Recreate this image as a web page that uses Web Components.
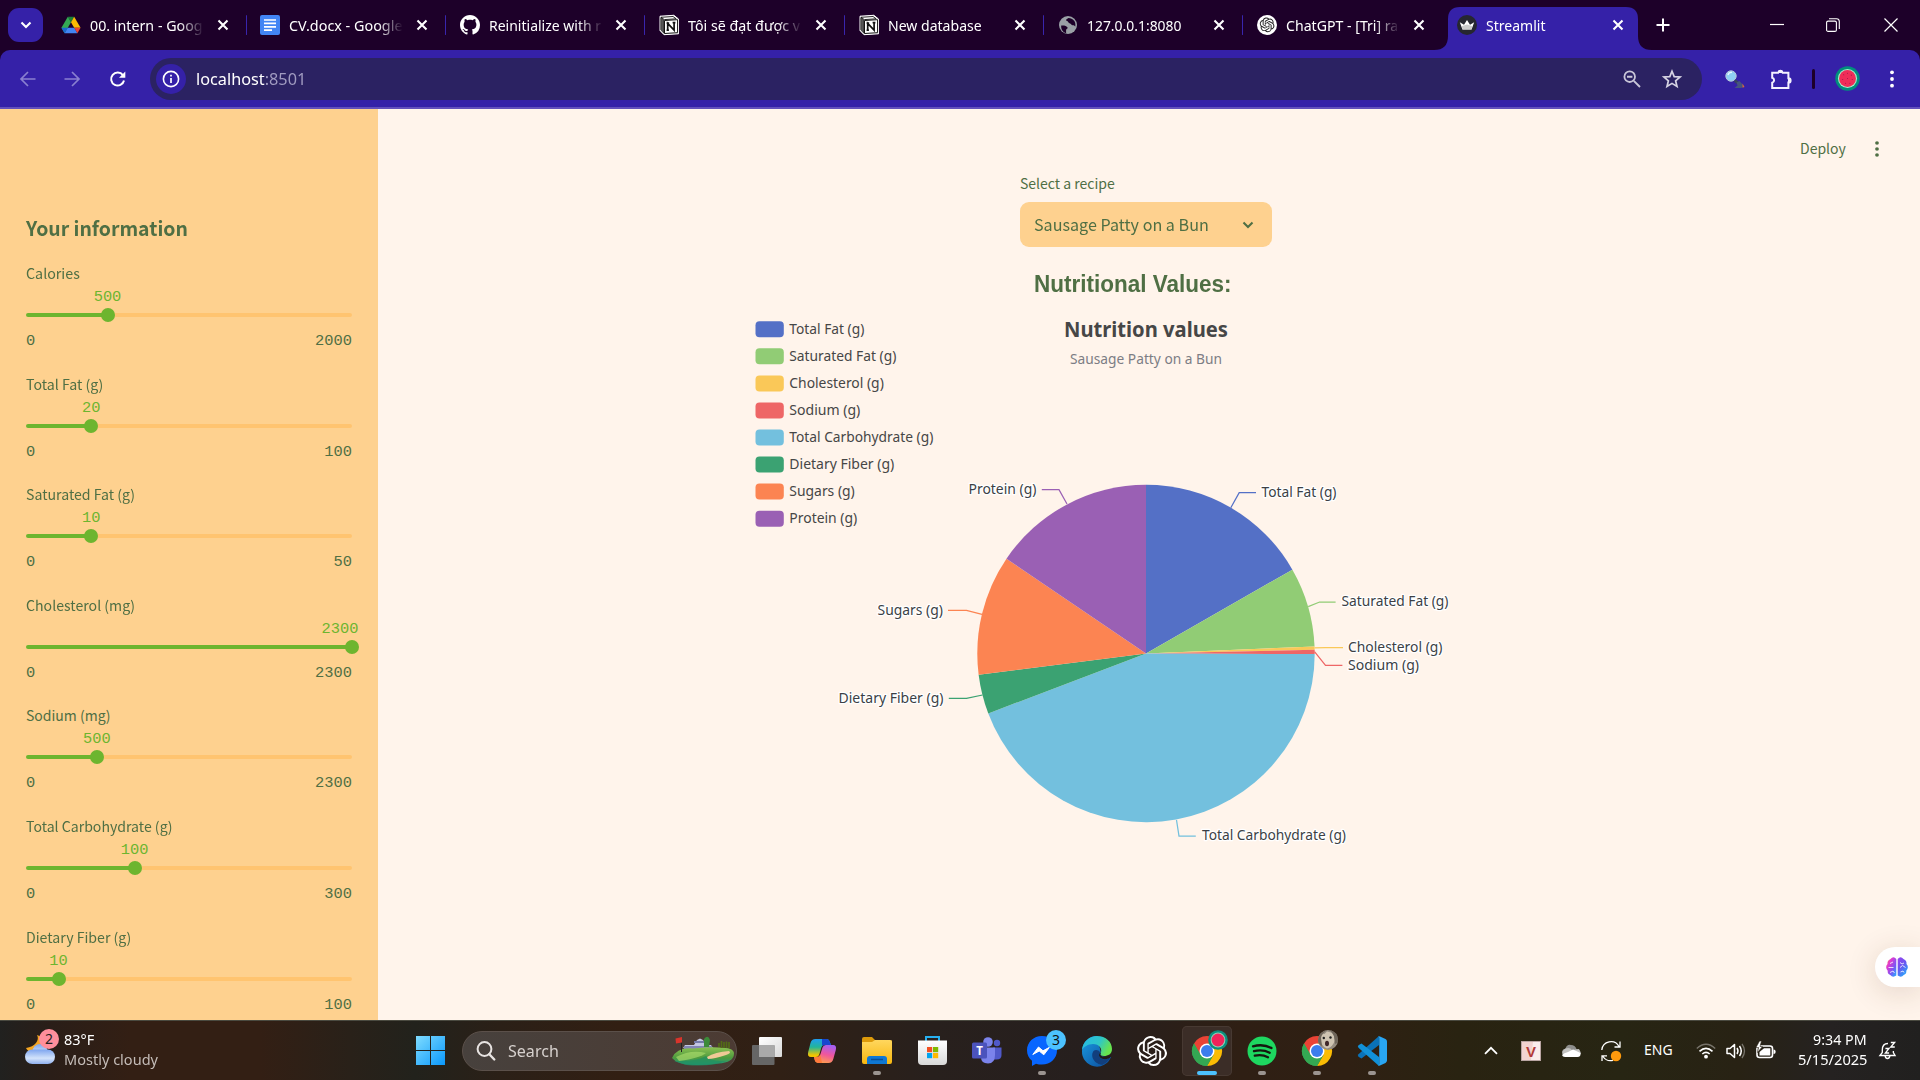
<!DOCTYPE html>
<html lang="en">
<head>
<meta charset="utf-8">
<title>Streamlit</title>
<style>
html,body{margin:0;padding:0;width:1920px;height:1080px;overflow:hidden;background:#fff4eb}
body{font-family:"Noto Sans",sans-serif}
</style>
</head>
<body>
<desktop-screen></desktop-screen>
<script>
const GPT='M22.2819 9.8211a5.9847 5.9847 0 0 0-.5157-4.9108 6.0462 6.0462 0 0 0-6.5098-2.9A6.0651 6.0651 0 0 0 4.9807 4.1818a5.9847 5.9847 0 0 0-3.9977 2.9 6.0462 6.0462 0 0 0 .7427 7.0966 5.98 5.98 0 0 0 .511 4.9107 6.051 6.051 0 0 0 6.5146 2.9001A5.9847 5.9847 0 0 0 13.2599 24a6.0557 6.0557 0 0 0 5.7718-4.2058 5.9894 5.9894 0 0 0 3.9977-2.9001 6.0557 6.0557 0 0 0-.7475-7.0729zm-9.022 12.6081a4.4755 4.4755 0 0 1-2.8764-1.0408l.1419-.0804 4.7783-2.7582a.7948.7948 0 0 0 .3927-.6813v-6.7369l2.02 1.1686a.071.071 0 0 1 .038.052v5.5826a4.504 4.504 0 0 1-4.4945 4.4944zm-9.6607-4.1254a4.4708 4.4708 0 0 1-.5346-3.0137l.142.0852 4.783 2.7582a.7712.7712 0 0 0 .7806 0l5.8428-3.3685v2.3324a.0804.0804 0 0 1-.0332.0615L9.74 19.9502a4.4992 4.4992 0 0 1-6.1408-1.6464zM2.3408 7.8956a4.485 4.485 0 0 1 2.3655-1.9728V11.6a.7664.7664 0 0 0 .3879.6765l5.8144 3.3543-2.0201 1.1685a.0757.0757 0 0 1-.071 0l-4.8303-2.7865A4.504 4.504 0 0 1 2.3408 7.872zm16.5963 3.8558L13.1038 8.364 15.1192 7.2a.0757.0757 0 0 1 .071 0l4.8303 2.7913a4.4944 4.4944 0 0 1-.6765 8.1042v-5.6772a.79.79 0 0 0-.407-.667zm2.0107-3.0231l-.142-.0852-4.7735-2.7818a.7759.7759 0 0 0-.7854 0L9.409 9.2297V6.8974a.0662.0662 0 0 1 .0284-.0615l4.8303-2.7866a4.4992 4.4992 0 0 1 6.6802 4.66zM8.3065 12.863l-2.02-1.1638a.0804.0804 0 0 1-.038-.0567V6.0742a4.4992 4.4992 0 0 1 7.3757-3.4537l-.142.0805L8.704 5.459a.7948.7948 0 0 0-.3927.6813zm1.0976-2.3654l2.602-1.4998 2.6069 1.4998v2.9994l-2.5974 1.4997-2.6067-1.4997Z';
const ICONS = {
drive:['0 0 24 24','<path d="M8.2 2h7.6L12 8.7z" fill="#188038"/><path d="M8.2 2 .5 15.4l3.8 6.6L12 8.7z" fill="#34a853"/><path d="M15.8 2 12 8.7l3.8 6.7h7.7z" fill="#fbbc04"/><path d="M8 15.4h8L19.7 22H4.3z" fill="#4285f4"/><path d="M8 15.4H.5L4.3 22z" fill="#1967d2"/><path d="M15.8 15.4h7.7L19.7 22z" fill="#ea4335"/>'],
docs:['0 0 20 20','<rect width="20" height="20" rx="2" fill="#4285f4"/><path d="M4 5h12M4 8.4h12M4 11.8h12M4 15.2h8" stroke="#fff" stroke-width="1.7"/>'],
github:['0 0 16 16','<path fill="#fff" d="M8 0C3.58 0 0 3.58 0 8c0 3.54 2.29 6.53 5.47 7.59.4.07.55-.17.55-.38 0-.19-.01-.82-.01-1.49-2.01.37-2.53-.49-2.69-.94-.09-.23-.48-.94-.82-1.13-.28-.15-.68-.52-.01-.53.63-.01 1.08.58 1.23.82.72 1.21 1.87.87 2.33.66.07-.52.28-.87.51-1.07-1.78-.2-3.64-.89-3.64-3.95 0-.87.31-1.59.82-2.15-.08-.2-.36-1.02.08-2.12 0 0 .67-.21 2.2.82.64-.18 1.32-.27 2-.27s1.36.09 2 .27c1.53-1.04 2.2-.82 2.2-.82.44 1.1.16 1.92.08 2.12.51.56.82 1.27.82 2.15 0 3.07-1.87 3.75-3.65 3.95.29.25.54.73.54 1.48 0 1.07-.01 1.93-.01 2.2 0 .21.15.46.55.38A8.01 8.01 0 0 0 16 8c0-4.42-3.58-8-8-8z"/>'],
notion:['0 0 20 20','<path d="M1 1.2 14.8.3 19.5 4v14.8L5 19.7 1 15.5z" fill="#fff" stroke="#fff" stroke-linejoin="round"/><path d="M2 2.3 14 1.5l3.2 2.3L5.3 4.6z" fill="#fff" stroke="#111" stroke-width=".9"/><path d="M1.7 2.6 5 5.2V18.3L1.7 14.8z" fill="#555" stroke="#111" stroke-width=".6"/><path d="M5.5 5.5 18.6 4.7v13L5.5 18.5z" fill="#fff" stroke="#111"/><path d="M8.7 15.2V8.3l6.4 6.8V7.5M7.6 8.2h2.6M13.6 7.6h2.8M7.6 15.2h2.3" fill="none" stroke="#111" stroke-width="1.7"/>'],
globe:['0 0 20 20','<circle cx="10" cy="10" r="9" fill="#9aa0a6"/><path d="M3.2 10.5c2.5-.3 5.6.3 6.4 2 .5 1.200-1.500 1.500-1.500 2.500v3.200c-3-.7-5.300-3.600-4.900-7.700zM10.500 3c-2.600 1.200-3.300 2.300-1.400 3 1.500.5 1 2 2.400 2.200 1.800.2 1.600 2.300 3.500 2 .8-.1 1.300.3 2.300 1.200.8-5-2.300-8.200-6.800-8.400z" fill="#1d0029"/>'],
gpt:['0 0 24 24','<path fill="currentColor" d="'+GPT+'"/>'],
gptTab:['0 0 36 36','<circle cx="18" cy="18" r="18" fill="#fff"/><path transform="translate(5 4.500) scale(1.100)" fill="#222" d="'+GPT+'"/>'],
streamlit:['0 0 20 20','<circle cx="10" cy="10" r="10" fill="#262730"/><path d="M2.800 7.200 7 9.800l3-4.800 3 4.800 4.200-2.600-2.700 7.300h-9z" fill="#fff"/><path d="M4.500 11.200 10 9.500l5.500 1.700-1 3.300h-9z" fill="#ccc"/>'],
close:['0 0 12 12','<path d="M1.500 1.500l9 9M10.500 1.500l-9 9" stroke="#fff" stroke-width="2.100"/>'],
plus:['0 0 14 14','<path d="M7 .5v13M.5 7h13" stroke="#fff" stroke-width="2"/>'],
chev:['0 0 12 8','<path d="M1.500 1.500 6 6l4.500-4.500" fill="none" stroke="currentColor" stroke-width="2.100"/>'],
min:['0 0 14 14','<path d="M0 6.500h14" stroke="#fff" stroke-width="1.200"/>'],
restore:['0 0 14 14','<rect x=".6" y="3.100" width="9.800" height="10.300" rx="1.500" fill="none" stroke="#fff" stroke-width="1.100"/><path d="M3 .7h7.500Q13.300.7 13.300 3.500V11" fill="none" stroke="#fff" stroke-width="1.100"/>'],
winclose:['0 0 14 14','<path d="M.5.5l13 13M13.500.5l-13 13" stroke="#fff" stroke-width="1.200"/>'],
back:['0 0 16 16','<path d="M15.500 8H1.500M8 1 1 8l7 7" fill="none" stroke="#8a80d0" stroke-width="1.700"/>'],
fwd:['0 0 16 16','<path d="M.5 8h14M8 1l7 7-7 7" fill="none" stroke="#8a80d0" stroke-width="1.700"/>'],
reload:['0 0 16 16','<path d="M14 9.500A6.500 6.500 0 1 1 12.900 4.200L14 5.500" fill="none" stroke="#fff" stroke-width="2"/><path d="M15.300.5v6.300H9z" fill="#fff"/>'],
info:['0 0 18 18','<circle cx="9" cy="9" r="7.600" fill="none" stroke="#fff" stroke-width="1.600"/><path d="M9 8v5M9 4.800v1.800" stroke="#fff" stroke-width="1.700"/>'],
zoomout:['0 0 18 18','<circle cx="6.700" cy="6.700" r="5.300" fill="none" stroke="#c9c6d8" stroke-width="1.800"/><path d="M4 6.700h5.400M10.800 10.800l6.200 6.200" stroke="#c9c6d8" stroke-width="1.900"/>'],
star:['0 0 20 20','<path d="M10 2.200l2.200 5.400 5.900.4-4.500 3.800 1.400 5.700-5-3.100-5 3.100 1.400-5.700L1.900 8l5.900-.4z" fill="none" stroke="#d6d3e3" stroke-width="1.700"/>'],
lens:['0 0 20 20','<circle cx="6" cy="7" r="5.200" fill="#8fd0f4" stroke="#b9c7da" stroke-width="1"/><path d="M3 6a3.500 3.500 0 0 1 4-2.500" stroke="#e9f8ff" stroke-width="1.400" fill="none"/><path d="M9.700 11.300l3 2.700" stroke="#39445f" stroke-width="3"/><path d="M11.500 13.500l3-1.500 4 4.500-2 2.500H9.500l3-2.500z" fill="#46557f"/><path d="M17.500 14.500l2 3.500-2 .8z" fill="#d56a3c"/>'],
puzzle:['0 0 22 22','<path d="M2.200 4.800h5.900a2.400 2.400 0 0 1 4.600 0h5.700v5.400a2.200 2.200 0 0 1 0 4.400v5.300H2.200v-5.200a2.600 2.600 0 0 0 0-5z" fill="none" stroke="#f4f1ff" stroke-width="2"/><path d="M8 3.700a2.400 1.900 0 0 1 4.800 0V5H8zM18 10.200a2.200 2.200 0 0 1 0 4.400z" fill="#f4f1ff"/>'],
melon:['0 0 26 26','<circle cx="13" cy="13" r="12.700" fill="#008f7c"/><circle cx="13" cy="13" r="9.900" fill="#a8efcf"/><circle cx="13" cy="13" r="8.800" fill="#f02d59"/><g fill="#9c1a45"><circle cx="9" cy="9" r=".55"/><circle cx="13" cy="7.500" r=".55"/><circle cx="17" cy="9.500" r=".55"/><circle cx="8" cy="14" r=".55"/><circle cx="13" cy="13" r=".55"/><circle cx="18" cy="14" r=".55"/><circle cx="11" cy="18" r=".55"/><circle cx="15.500" cy="18" r=".55"/></g>'],
melonBadge:['0 0 20 20','<circle cx="10" cy="10" r="9.800" fill="#0b8f7d"/><circle cx="10" cy="10" r="7.400" fill="#8fd3b6"/><circle cx="10" cy="10" r="6.400" fill="#f0245a"/>'],
dots:['0 0 4 18','<g fill="currentColor"><circle cx="2" cy="2.300" r="1.900"/><circle cx="2" cy="9" r="1.900"/><circle cx="2" cy="15.700" r="1.900"/></g>'],
weather:['0 0 36 36','<defs><linearGradient id="c" x1="0" y1="0" x2="0" y2="1"><stop offset="0" stop-color="#7ea5ef"/><stop offset=".6" stop-color="#d3e3fb"/><stop offset="1" stop-color="#8fb0ef"/></linearGradient></defs><path d="M14 5c3 5-2 12-11 13 3 6 12 8 17 2s1-13-6-15z" fill="#f5a623"/><circle cx="17" cy="21.500" r="7.500" fill="url(#c)"/><rect x="2" y="19.500" width="30" height="14.500" rx="7.300" fill="url(#c)"/>'],
start:['0 0 29 29','<defs><linearGradient id="w" x1="0" y1="0" x2="1" y2="1"><stop offset="0" stop-color="#7fdcff"/><stop offset="1" stop-color="#0a98fb"/></linearGradient></defs><path d="M0 0h14v14H0zM15 0h14v14H15zM0 15h14v14H0zM15 15h14v14H15z" fill="url(#w)"/>'],
search:['0 0 20 20','<circle cx="8.500" cy="8" r="6.900" fill="none" stroke="#e8e4e2" stroke-width="2"/><path d="M13.300 13.200l5 5.300" stroke="#e8e4e2" stroke-width="2.400" stroke-linecap="round"/>'],
golf:['0 0 64 30','<defs><linearGradient id="g" x1="0" y1="0" x2="0" y2="1"><stop offset="0" stop-color="#8cc152"/><stop offset=".6" stop-color="#4d9a3e"/><stop offset="1" stop-color="#1f9a80"/></linearGradient></defs><path d="M12 12h30l-2-3h-5l-3-5-3-1.500L26 4l-3 5h-9z" fill="#c3c6e2"/><path d="M13 10h28v3H13z" fill="#8286b4"/><path d="M23 6h12" stroke="#747aa8" stroke-width="2"/><path d="M33 3q4-5 6 1l-1 7h-5z" fill="#3c8a3a"/><path d="M1 22Q6 11 22 12.500q18-2 26-1 15 0 15 6 0 9-16 10-30 4-42-2z" fill="url(#g)"/><path d="M5 21q15-8 30-4-6 5-27 8z" fill="#a6d96a" opacity=".7"/><path d="M3 25q22 1 32-5 5 6 20 5-14 6-40 4z" fill="#1f8f63" opacity=".7"/><path d="M36 21q8-5 22-6 3 2-3 4-12 4-18 4z" fill="#f0c996"/><path d="M48 11V7M50.500 12V5M53 12V6M55.500 12V5.500M58 12V6" stroke="#536b16" stroke-width="1.700"/><path d="M10.500 2v14" stroke="#222" stroke-width="1"/><path d="M4.500 2.500 11 1v5.500l-6 1z" fill="#d9342b"/>'],
taskview:['0 0 30 28','<defs><linearGradient id="t" x1="0" y1="0" x2="1" y2="1"><stop offset="0" stop-color="#fff"/><stop offset="1" stop-color="#d9d9d9"/></linearGradient></defs><rect x="7" y="0" width="23" height="20" rx="1" fill="url(#t)"/><rect x="0" y="8" width="22.500" height="20" rx="1" fill="#666"/><rect x="7" y="8" width="15.500" height="12" fill="#a9a9a9"/>'],
copilot:['0 0 28 26','<defs><linearGradient id="a" x1="0" y1="0" x2="0" y2="1"><stop offset="0" stop-color="#1f9cf0"/><stop offset=".45" stop-color="#22b59a"/><stop offset=".9" stop-color="#f2c500"/></linearGradient><linearGradient id="b" x1=".6" y1="0" x2=".3" y2="1"><stop offset="0" stop-color="#a55ff0"/><stop offset=".5" stop-color="#f0569c"/><stop offset="1" stop-color="#ffa14b"/></linearGradient></defs><path d="M7.500 1h11q2.500 0 3.300 3L23 7h-7q-2 0-2.700 2.500l-2 7q-.8 2.500-3.300 2.500H3q-4 0-2.800-5l2.300-9Q3.500 1 7.500 1z" fill="url(#a)"/><path d="M14 1h4.500q2.500 0 3.300 3L23 7h-6q-2 0-3 1z" fill="#1746cf"/><path d="M20.500 25H10q-2.500 0-3.200-2.800L6 19h3q2.500 0 3.300-2.500l2.200-7Q15.300 7 17.800 7H25q4 0 2.800 5l-2.500 9q-1 4-4.800 4z" fill="url(#b)"/><path d="M6 19h3q2.500 0 3.300-2.500L14 25h-4q-2.500 0-3.200-2.800z" fill="#ff7a3c"/>'],
folder:['0 0 30 27','<defs><linearGradient id="f" x1="0" y1="0" x2="0" y2="1"><stop offset="0" stop-color="#ffd75e"/><stop offset="1" stop-color="#f8b70f"/></linearGradient></defs><path d="M0 2q0-2 2-2h8l3.500 3.500H30V12H0z" fill="#dd9a0a"/><path d="M0 5h10l3-2h15q2 0 2 2v20q0 2-2 2H2q-2 0-2-2z" fill="url(#f)"/><path d="M5 27v-5q0-3 3-3h14q3 0 3 3v5z" fill="#0f78d4"/><path d="M9 22.500h12" stroke="#0a4f96" stroke-width="1.500"/>'],
store:['0 0 29 29','<defs><linearGradient id="s" x1="0" y1="0" x2="0" y2="1"><stop offset="0" stop-color="#fff"/><stop offset="1" stop-color="#d8d8d8"/></linearGradient></defs><path d="M8 7V1h13v6" fill="none" stroke="#27b0f0" stroke-width="2"/><path d="M0 4.500h29V25q0 4-4 4H4q-4 0-4-4z" fill="url(#s)"/><path d="M9 11h5.200v5.200H9z" fill="#f25022"/><path d="M15 11h5.200v5.200H15z" fill="#7fba00"/><path d="M9 17h5.200v5.200H9z" fill="#00a4ef"/><path d="M15 17h5.200v5.200H15z" fill="#ffb900"/>'],
teams:['0 0 30 27','<circle cx="16" cy="5" r="4.800" fill="#7b83eb"/><circle cx="25" cy="6" r="3.200" fill="#5059c9"/><path d="M21 10.500h8.500V18q0 4.500-5 4.500h-3z" fill="#5059c9"/><path d="M9 10.500h14V18q0 8.500-7 8.500T9 20z" fill="#7b83eb"/><rect y="5.500" width="15" height="16" rx="1.500" fill="#4b53bc"/><text x="7.500" y="17.500" font-size="11.500" font-weight="700" font-family="Noto Sans,sans-serif" fill="#fff" text-anchor="middle">T</text>'],
messenger:['0 0 30 30','<path d="M15 0C6.500 0 0 6.200 0 14.300c0 4.400 1.900 8 5 10.500V30l4-2.200c2 .6 3.800.8 6 .8 8.500 0 15-6.200 15-14.300S23.500 0 15 0z" fill="#0866ff"/><path d="M5.800 18.500 11.500 11l4.500 3.800 6.500-3.500-5.700 7.500-4.600-3.800z" fill="#fff" stroke="#fff" stroke-linejoin="round"/>'],
edge:['0 0 30 30','<defs><linearGradient id="e1" x1="0" y1="0" x2="1" y2=".4"><stop offset="0" stop-color="#25b9e6"/><stop offset=".6" stop-color="#2ec6c9"/><stop offset="1" stop-color="#67e34f"/></linearGradient><linearGradient id="e2" x1="0" y1="0" x2="1" y2="1"><stop offset="0" stop-color="#1b9de2"/><stop offset="1" stop-color="#0b4a9b"/></linearGradient></defs><path d="M0 15A15 15 0 0 1 15 0l4 17c-.6 3 2 4.500 10 4A15 15 0 0 1 0 15z" fill="url(#e2)"/><path d="M0 14C1 5 8 0 15 0c9 0 15 6 15 13 0 5-4 7-8 7-3 0-4-1.200-3.500-2.500C21 13 17 8 11 8 6 8 1.500 11 0 14z" fill="url(#e1)"/><path d="M11.500 15c-4 6 2 13.500 9 13.800 3-1.300 6-4 7.500-7-4 3-9 2-10.500-1-1-2-.3-3 .6-4.300-1.600-3-5-3-6.600-1.500z" fill="#123f7d"/><path d="M19 17c-1.500 1.500 0 3.800 4 3.800 2.500 0 4.500-.6 6-2l-1 3c-4 2.400-9 1.700-10.500-1-1-2-.3-3 .6-4.300z" fill="#221a18"/>'],
chrome:['0 0 30 30','<path d="M15 15 2 7.500A15 15 0 0 1 28 7.500H15z" fill="#ea4335"/><path d="M15 15 2 7.500A15 15 0 0 0 15 30l6.500-11.200z" fill="#34a853"/><path d="M15 7.500h13A15 15 0 0 1 15 30l6.500-11.200z" fill="#fbbc04"/><path d="M2 7.500 8.500 18.700 15 15V7.500z" fill="#ea4335"/><path d="M2 7.500A15 15 0 0 0 15 30l6.500-11.200L15 22.500l-6.500-3.700z" fill="#34a853"/><circle cx="15" cy="15" r="7.500" fill="#fff"/><circle cx="15" cy="15" r="6" fill="#3b7ded"/>'],
cat:['0 0 20 20','<circle cx="10" cy="10" r="10" fill="#958c80"/><path d="M2 7Q4 3 6.500 4L9 1.500 15 3l2 7q-2 7-8 8.500Q2 16 2 7z" fill="#cfc4b2"/><path d="M0 10q1-8 9-10-5 3-6 8l1 8Q0 14 0 10zM20 10Q20 2 12 0l4 6 1 8q3-1 3-4z" fill="#6f665b"/><circle cx="5.800" cy="8" r="1.200" fill="#222"/><circle cx="12.500" cy="7.500" r="1.200" fill="#222"/><ellipse cx="9" cy="13.500" rx="2" ry="2.800" fill="#40282a"/>'],
spotify:['0 0 30 30','<circle cx="15" cy="15" r="14.500" fill="#1ed760"/><path d="M6 10.300q10-2.800 18.500 1.700M7 15.200q8.500-2.200 15.700 1.500M7.800 19.700q7-1.800 13.200 1.500" fill="none" stroke="#15180f" stroke-width="2.300" stroke-linecap="round"/>'],
vscode:['0 0 30 30','<path d="M22 0v9L4.500 22.500 1.800 21Q0 19.700 1.500 18.200z" fill="#0a72b8"/><path d="M22 30v-9L4.500 7.500 1.800 9Q0 10.300 1.500 11.800z" fill="#1191d8"/><path d="M21 0q1 0 2 .4l5.500 2.700Q30 4 30 5.500v19q0 1.500-1.500 2.400L23 29.600q-1 .4-2 .4 1.200-.4 1.200-2V2q0-1.600-1.200-2z" fill="#29a6f3"/>'],
up:['0 0 14 9','<path d="M1 7.800 7 1.800l6 6" fill="none" stroke="#fff" stroke-width="1.800"/>'],
vkey:['0 0 20 20','<rect width="20" height="20" fill="#b9a5a3"/><rect x="1" y="1" width="18" height="18" fill="#f2d3d0"/><path d="M12 1h7v18h-9z" fill="#fff" opacity=".6"/><text x="10" y="15.500" font-size="15" font-weight="700" font-family="Liberation Sans,sans-serif" fill="#b23a3a" text-anchor="middle">V</text>'],
cloud:['0 0 20 14','<path d="M2 11q-3-5 2.500-6.500Q6 0 10 1q4 0 5.500 4Q20 6 19.500 10z" fill="#8e8e8c"/><path d="M4.500 4.500Q9 3 11 6l7-1q2 3 1.500 5L2 11q-2-4 2.500-6.500z" fill="#c2c2c0"/><path d="M1 11q2-2 6-3l5-2.500L19.500 9q.5 4-3 4H4q-2.500 0-3-2z" fill="#fff"/>'],
sync:['0 0 20 20','<path d="M.8 9A9.200 9.200 0 0 1 18 5.500M19 .5V6h-5.500M12 19.300A9.200 9.200 0 0 1 2 15.500M1 20v-5.200h5" fill="none" stroke="#fff" stroke-width="1.300"/><circle cx="15" cy="15" r="5.200" fill="#ff9a0d"/>'],
wifi:['0 0 20 16','<path d="M.8 5.500q9.200-8.500 18.400 0" fill="none" stroke="#77736a" stroke-width="1.400"/><path d="M3.500 8.300q6.500-6 13 0M6.300 11q3.700-3.400 7.400 0" fill="none" stroke="#fff" stroke-width="1.600"/><circle cx="10" cy="13.700" r="1.900" fill="#fff"/>'],
speaker:['0 0 20 16','<path d="M1 5.500h3L8.500 1.500v13L4 10.500H1z" fill="none" stroke="#fff" stroke-width="1.500" stroke-linejoin="round"/><path d="M11 5q2 3 0 6M13.500 3q3.500 5 0 10" fill="none" stroke="#fff" stroke-width="1.500"/><path d="M16 1q5 7 0 14" fill="none" stroke="#77736a" stroke-width="1.300"/>'],
battery:['0 0 20 16','<rect x="1" y="3" width="15.500" height="11.500" rx="2.500" fill="none" stroke="#fff" stroke-width="1.600"/><path d="M3.500 12.500V9L8 5.300h6.300v7.200z" fill="#fff"/><path d="M17.500 6.500q2.200 0 2.200 2.200t-2.200 2.200z" fill="#fff"/><path d="M3.500-2 0 4.500h2.500L1.500 9.500 6.500 3.500H4L5.500-2z" fill="#fff" stroke="#2a2215" stroke-width=".6"/>'],
bell:['0 0 18 19','<path d="M9.500 2.500q-6 0-6 6.500v2.500L1 14.500h16l-1.800-3V10M6.500 15q.5 2.500 2.500 2.500t2.500-2.500" fill="none" stroke="#fff" stroke-width="1.400"/><path d="M6.800 7.500h3.700L6.800 12h3.900M12.500 1.500h4L12.500 6h4.200" fill="none" stroke="#fff" stroke-width="1.400"/>'],
brain:['0 0 22 20','<defs><linearGradient id="p" x1="0" y1="0" x2="1" y2="1"><stop offset="0" stop-color="#ff8a2c"/><stop offset=".3" stop-color="#e23ad0"/><stop offset=".65" stop-color="#7a56f5"/><stop offset="1" stop-color="#1fb4ff"/></linearGradient><linearGradient id="q" x1="0" y1="0" x2=".6" y2="1"><stop offset="0" stop-color="#9a45ee"/><stop offset=".5" stop-color="#6b55f0"/><stop offset="1" stop-color="#2aa6fb"/></linearGradient></defs><path d="M10.300 2v16.500q-3.500 2.500-6-.5-3-1-2.600-4.200Q-1.300 10 1.500 7 1 3.500 4.500 2q3-3.300 5.800 0z" fill="url(#p)"/><path d="M11.700 2v16.500q3.500 2.500 6-.5 3-1 2.600-4.200 3-3.800.2-6.800.5-3.500-3-5-3-3.300-5.800 0z" fill="url(#q)"/><path d="M4 6.500 7 5M2.500 10.500h5M4 15.500l3-1.500 1.500 2M14 5.500l2 1.500 2-1M14 10.500l2.500-2 3 2M14.500 15l2.500-1 1 1.500" fill="none" stroke="#fff" stroke-width="1" opacity=".8"/>']
};

class UiIcon extends HTMLElement{
  connectedCallback(){
    const [vb,body]=ICONS[this.getAttribute('name')];
    const w=this.getAttribute('w'),h=this.getAttribute('h')||w;
    this.attachShadow({mode:'open'}).innerHTML=`<style>:host{display:block;flex:none;width:${w}px;height:${h}px}svg{display:block;overflow:visible}</style><svg viewBox="${vb}" width="${w}" height="${h}" preserveAspectRatio="none">${body}</svg>`;
  }
}
customElements.define('ui-icon',UiIcon);

/* Single-line text condensed to a given advance width. */
class FitText extends HTMLElement{
  connectedCallback(){
    const w=+this.getAttribute('w');
    this.attachShadow({mode:'open'}).innerHTML=`<style>:host{display:block;flex:none;white-space:nowrap;width:${w}px}span{display:inline-block;transform-origin:0 50%}</style><span><slot></slot></span>`;
    const s=this.shadowRoot.querySelector('span');
    s.style.transform=`scaleX(${w/s.offsetWidth})`;
  }
}
customElements.define('fit-text',FitText);

class BrowserTab extends HTMLElement{
  connectedCallback(){
    this.attachShadow({mode:'open'}).innerHTML=`<style>
    :host{display:flex;flex:none;box-sizing:border-box;width:199.400px;height:50px;align-items:center;padding-left:14px;color:#fff;font-size:14.500px;line-height:34px;position:relative}
    :host([active]) .bg{display:block}
    .bg{display:none;position:absolute;left:-9px;top:7px}
    ui-icon,.t{position:relative}
    .t{width:114px;height:34px;margin-left:9px;flex:none}
    :host([fade]) .t{-webkit-mask-image:linear-gradient(90deg,#000 78%,transparent 100%);mask-image:linear-gradient(90deg,#000 78%,transparent 100%)}
    .x{margin-left:12.500px}
    i{display:block;width:3px;height:20px;border-radius:2px;background:#3925ad;margin-left:17px}
    :host([active]) i,:host([last]) i{visibility:hidden}
    </style><svg class="bg" width="218" height="43"><path d="M0 43q14 0 14-14V12Q14 0 26 0h166q12 0 12 12v17q0 14 14 14z" fill="#3521a8"/></svg>
    <ui-icon name="${this.getAttribute('icon')}" w="20"></ui-icon><div class="t"><fit-text w="${this.getAttribute('tw')}">${this.getAttribute('label')}</fit-text></div><ui-icon class="x" name="close" w="12"></ui-icon><i></i>`;
  }
}
customElements.define('browser-tab',BrowserTab);

class BrowserChrome extends HTMLElement{
  connectedCallback(){
    this.attachShadow({mode:'open'}).innerHTML=`<style>
    :host{display:block;height:109px;background:#1d0029}
    .tabs{height:50px;display:flex;align-items:center}
    .dd{width:35px;height:34px;border-radius:11px;background:#3521a8;color:#fff;margin-left:8px;margin-right:4px;display:flex;align-items:center;justify-content:center}
    .plus{margin-left:14px}.min{margin-left:100px}.res{margin-left:42px}.cl{margin-left:44px}
    .bar{height:59px;box-sizing:border-box;border-bottom:2px solid #6350bb;background:#3521a8;border-radius:10px 10px 0 0;display:flex;align-items:center;color:#fff}
    .pill{width:1552px;height:42px;border-radius:21px;background:#2b2262;margin-left:24px;box-sizing:border-box;padding-left:6px;display:flex;align-items:center}
    .i{width:30px;height:30px;border-radius:50%;background:#3521a8;display:flex;align-items:center;justify-content:center}
    .u{margin-left:10px;font-size:17px;line-height:30px;margin-right:auto}
    .u span{color:#a09bc0}
    .sep{width:3px;height:20px;background:#1d0029;border-radius:2px;margin:0 20px 0 20px}
    </style><div class="tabs"><div class="dd"><ui-icon name="chev" w="12" h="8"></ui-icon></div>
    <browser-tab fade icon="drive" label="00. intern - Goog" tw="113"></browser-tab>
    <browser-tab fade icon="docs" label="CV.docx - Google" tw="114"></browser-tab>
    <browser-tab fade icon="github" label="Reinitialize with r" tw="112"></browser-tab>
    <browser-tab fade icon="notion" label="Tôi sẽ đạt được v" tw="112"></browser-tab>
    <browser-tab icon="notion" label="New database" tw="94"></browser-tab>
    <browser-tab icon="globe" label="127.0.0.1:8080" tw="94"></browser-tab>
    <browser-tab fade last icon="gptTab" label="ChatGPT - [Tri] ra" tw="112"></browser-tab>
    <browser-tab active icon="streamlit" label="Streamlit" tw="59"></browser-tab>
    <ui-icon class="plus" name="plus" w="14"></ui-icon><ui-icon class="min" name="min" w="14"></ui-icon><ui-icon class="res" name="restore" w="14"></ui-icon><ui-icon class="cl" name="winclose" w="14"></ui-icon></div>
    <div class="bar"><ui-icon name="back" w="16" style="margin-left:20px"></ui-icon><ui-icon name="fwd" w="16" style="margin-left:28px"></ui-icon><ui-icon name="reload" w="16" style="margin-left:30px"></ui-icon>
    <div class="pill"><div class="i"><ui-icon name="info" w="18"></ui-icon></div><fit-text class="u" w="110">localhost<span>:8501</span></fit-text><ui-icon name="zoomout" w="18"></ui-icon><ui-icon name="star" w="20" style="margin:0 20px 0 21px"></ui-icon></div>
    <ui-icon name="lens" w="20" style="margin-left:23px"></ui-icon><ui-icon name="puzzle" w="22" style="margin-left:25px"></ui-icon><div class="sep"></div><ui-icon name="melon" w="25"></ui-icon><ui-icon name="dots" w="4" h="18" style="margin-left:30px"></ui-icon></div>`;
  }
}
customElements.define('browser-chrome',BrowserChrome);

class SliderField extends HTMLElement{
  connectedCallback(){
    const g=n=>this.getAttribute(n),p=g('value')/g('max')*100;
    this.attachShadow({mode:'open'}).innerHTML=`<style>
    :host{display:block;height:110.600px;width:326px;flex:none;color:#4f6f44}
    .l{font:400 14px/22px "Noto Sans CJK SC",sans-serif;height:22px}
    .v,.r{font:400 15.400px/22px "Liberation Mono",monospace}
    .v{height:22px;margin-top:2px;display:flex;color:#6db52f}
    .v b{font-weight:400;width:0;display:flex;justify-content:center;margin-left:${g('shift')||p+'%'}}
    .k{height:4px;margin:5px 0 13px;border-radius:2px;background:linear-gradient(90deg,#6db52f ${p}%,#ffc470 ${p}%);display:flex;align-items:center}
    .k i{width:14px;height:14px;border-radius:50%;background:#6db52f;margin-left:calc(${p}% - 7px);flex:none}
    .r{display:flex;justify-content:space-between}
    </style><div class="l"><fit-text w="${g('w')}">${g('label')}</fit-text></div><div class="v"><b>${g('value')}</b></div><div class="k"><i></i></div><div class="r"><span>0</span><span>${g('max')}</span></div>`;
  }
}
customElements.define('slider-field',SliderField);

class SideBar extends HTMLElement{
  connectedCallback(){
    this.attachShadow({mode:'open'}).innerHTML=`<style>
    :host{display:flex;flex-direction:column;width:378px;height:911px;flex:none;box-sizing:border-box;padding:102px 26px 0;background:#fed18f;overflow:hidden}
    h2{margin:0 0 17px;font:600 20px/34px "Noto Sans CJK SC",sans-serif;color:#4f6f44;height:34px}
    </style><h2><fit-text w="162">Your information</fit-text></h2>
    <slider-field label="Calories" w="54" value="500" max="2000"></slider-field>
    <slider-field label="Total Fat (g)" w="77" value="20" max="100"></slider-field>
    <slider-field label="Saturated Fat (g)" w="109" value="10" max="50"></slider-field>
    <slider-field label="Cholesterol (mg)" w="109" value="2300" max="2300" shift="314px"></slider-field>
    <slider-field label="Sodium (mg)" w="85" value="500" max="2300"></slider-field>
    <slider-field label="Total Carbohydrate (g)" w="147" value="100" max="300"></slider-field>
    <slider-field label="Dietary Fiber (g)" w="105" value="10" max="100"></slider-field>`;
  }
}
customElements.define('side-bar',SideBar);

class NutritionPie extends HTMLElement{
  connectedCallback(){
    const cx=1146,cy=653.5,r=168.700;
    const D=[['Total Fat (g)','#5470c6',60.2,75,[1230.8,507.7,1239.2,492.7,1256,492.7],1261.5],
    ['Saturated Fat (g)','#91cc75',87.6,107,[1308.2,606.7,1319.6,602,1335.6,602],1341.5],
    ['Cholesterol (g)','#fac858',88.7,94.500,[1314.5,647.8,1325,647.6,1343,647.6],1348],
    ['Sodium (g)','#ee6666',90.2,71,[1314.5,651.7,1325.5,665.4,1342.4,665.4],1348],
    ['Total Carbohydrate (g)','#73c0de',249.2,144,[1176.5,820,1179,836,1195.8,836],1202],
    ['Dietary Fiber (g)','#3ba272',262.8,105,[982.5,695,966.5,698.4,948.8,698.4],838.5],
    ['Sugars (g)','#fc8452',304.2,65.500,[982,614.3,966.5,610.3,948,610.3],877.5],
    ['Protein (g)','#9a60b4',360,68,[1067,504,1059,489.7,1041.8,489.7],968.500]];
    let a=0,out='';
    const pt=d=>{const t=d*Math.PI/180;return (cx+r*Math.sin(t)).toFixed(2)+' '+(cy-r*Math.cos(t)).toFixed(2)};
    D.forEach(([n,c,e,w,l,x],i)=>{
      out+=`<path d="M${cx} ${cy}L${pt(a)}A${r} ${r} 0 ${e-a>180?1:0} 1 ${pt(e)}z" fill="${c}"/>`;
      out+=`<polyline points="${l}" fill="none" stroke="${c}" stroke-width="1.250"/>`;
      out+=`<text class="h" x="${x}" y="${l[5]+4.300}" textLength="${w}" lengthAdjust="spacingAndGlyphs">${n}</text>`;
      out+=`<rect x="755.500" y="${321.300+27.050*i}" width="28.300" height="16" rx="4" fill="${c}"/><text x="789.300" y="${333.500+27*i}" textLength="${w}" lengthAdjust="spacingAndGlyphs">${n}</text>`;
      a=e;
    });
    this.attachShadow({mode:'open'}).innerHTML=`<style>:host{display:block}svg{display:block}text{font:400 14.500px "Noto Sans",sans-serif;fill:#464646}.h{fill:#3c3f45;stroke:#fff;stroke-width:2.500px;paint-order:stroke;stroke-linejoin:round}.t{font:700 21.500px "Noto Sans",sans-serif;fill:#464646}.s{fill:#7c7d84}</style>
    <svg width="1542" height="700" viewBox="378 310 1542 700"><text class="t" x="1064" y="336.700" textLength="164" lengthAdjust="spacingAndGlyphs">Nutrition values</text><text class="s" x="1070" y="364" textLength="152" lengthAdjust="spacingAndGlyphs">Sausage Patty on a Bun</text>${out}</svg>`;
  }
}
customElements.define('nutrition-pie',NutritionPie);

class RecipePage extends HTMLElement{
  connectedCallback(){
    this.attachShadow({mode:'open'}).innerHTML=`<style>
    :host{display:flex;flex-direction:column;width:1542px;height:911px;background:#fff4eb;color:#4f6f44;position:relative;font-family:"Noto Sans CJK SC",sans-serif;overflow:hidden}
    header{height:61px;box-sizing:border-box;padding:18px 41px 0 0;display:flex;justify-content:flex-end;align-items:center;flex:none}
    header fit-text{font-size:14px;line-height:22px;margin-bottom:1px}
    header ui-icon{margin-left:29px}
    label{font-size:14px;line-height:22px;height:22px;margin:2px 0 8px 642px;display:block;flex:none}
    .s{margin-left:642px;width:252px;height:45px;border-radius:9px;background:#fed18f;box-sizing:border-box;padding:0 18px 0 14px;display:flex;align-items:center;justify-content:space-between;font-size:16.500px;line-height:26px;flex:none}
    .s fit-text{margin-bottom:1px}
    h3{margin:19px 0 0 656px;height:44px;flex:none;font:700 23.300px/36px "Liberation Sans",sans-serif}
    nutrition-pie{flex:none}
    .b{position:absolute;right:0;top:838px;width:45px;height:40px;border-radius:20px 0 0 20px;background:#fff;box-shadow:0 5px 30px rgba(90,50,20,.16);display:flex;align-items:center;padding-left:11px;box-sizing:border-box}
    </style><header><fit-text w="46">Deploy</fit-text><ui-icon name="dots" w="4" h="16"></ui-icon></header>
    <label><fit-text w="95">Select a recipe</fit-text></label>
    <div class="s"><fit-text w="175">Sausage Patty on a Bun</fit-text><ui-icon name="chev" w="12" h="8"></ui-icon></div>
    <h3><fit-text w="198">Nutritional Values:</fit-text></h3>
    <nutrition-pie></nutrition-pie><div class="b"><ui-icon name="brain" w="22" h="20"></ui-icon></div>`;
  }
}
customElements.define('recipe-page',RecipePage);

class TaskApp extends HTMLElement{
  connectedCallback(){
    const g=n=>this.getAttribute(n);
    this.attachShadow({mode:'open'}).innerHTML=`<style>
    :host{display:flex;flex:none;width:50px;height:50px;margin-right:5px;box-sizing:border-box;border-radius:5px;align-items:center;justify-content:center;position:relative;color:#fff}
    :host([active]){background:#3b2d27;box-shadow:inset 0 0 0 1px #473932}
    i{position:absolute;bottom:1px;left:21px;width:8px;height:4px;border-radius:2px;background:#9b9490}
    :host([active]) i{left:15px;width:20px;background:#4cc2ff}
    .b{position:absolute;right:4px;top:4px}
    .n{right:1px;width:20px;height:20px;border-radius:50%;background:#4cc2ff;color:#111;font-size:14px;line-height:20px;text-align:center}
    </style><ui-icon name="${g('icon')}" w="${g('w')||30}" h="${g('h')||g('w')||30}"></ui-icon>
    ${g('count')?`<div class="b n">${g('count')}</div>`:''}${g('badge')?`<ui-icon class="b" name="${g('badge')}" w="20"></ui-icon>`:''}${this.hasAttribute('open')||this.hasAttribute('active')?'<i></i>':''}`;
  }
}
customElements.define('task-app',TaskApp);

class TaskBar extends HTMLElement{
  connectedCallback(){
    this.attachShadow({mode:'open'}).innerHTML=`<style>
    :host{display:flex;align-items:center;height:60px;box-sizing:border-box;border-top:1px solid #4a4a40;color:#fff;background:linear-gradient(90deg,#21211f 0,#2a1e18 50px,#331f14 130px,#331f14 260px,#292119 350px,#22221c 415px,#2b2017 500px,#321f13 620px,#302015 780px,#28201d 930px,#261f1e 1090px,#2f1f14 1240px,#2f2013 1350px,#292311 1460px,#272513 1620px,#282214 1740px,#252221 1830px,#21201f 1920px);font-size:14px;line-height:20px}
    .w{position:relative;margin-left:23px;width:36px;height:36px;margin-bottom:5px}
    .w b{position:absolute;left:16px;top:-1px;width:20px;height:20px;border-radius:50%;background:#ff8f9c;color:#222;font-weight:400;text-align:center;line-height:20px}
    .wt{margin-left:5px;width:352px;color:#fff;margin-bottom:2px}
    .wt :last-child{color:#c4bcb8}
    .s{width:275px;height:40px;box-sizing:border-box;border-radius:20px;background:linear-gradient(90deg,#47413d,#4c3b33);border:1px solid #5b504a;display:flex;align-items:center;margin:0 5px 0 17px;padding:0 1px 0 13px;flex:none}
    .s fit-text{font-size:17px;line-height:26px;margin:0 auto 0 12px;color:#d7d1ce}
    .clock{display:flex;flex-direction:column;align-items:flex-end;margin-left:22px;margin-right:12px;margin-bottom:2px}
    </style><div class="w"><ui-icon name="weather" w="36"></ui-icon><b>2</b></div><div class="wt"><fit-text w="30">83°F</fit-text><fit-text w="94.500">Mostly cloudy</fit-text></div>
    <ui-icon name="start" w="29"></ui-icon><div class="s"><ui-icon name="search" w="20"></ui-icon><fit-text w="51">Search</fit-text><ui-icon name="golf" w="64" h="30"></ui-icon></div>
    <task-app icon="taskview" w="30" h="28"></task-app><task-app icon="copilot" w="28" h="26"></task-app><task-app open icon="folder" w="30" h="27"></task-app><task-app icon="store" w="29"></task-app><task-app icon="teams" w="30" h="27"></task-app><task-app open icon="messenger" count="3"></task-app><task-app icon="edge"></task-app><task-app icon="gpt"></task-app><task-app active icon="chrome" badge="melonBadge"></task-app><task-app open icon="spotify"></task-app><task-app open icon="chrome" badge="cat"></task-app><task-app open icon="vscode"></task-app>
    <ui-icon name="up" w="14" h="9" style="margin-left:82px"></ui-icon><ui-icon name="vkey" w="20" style="margin-left:23px"></ui-icon><ui-icon name="cloud" w="20" h="14" style="margin-left:20px"></ui-icon><ui-icon name="sync" w="20" style="margin-left:20px"></ui-icon><fit-text w="29" style="margin-left:23px;margin-bottom:1px">ENG</fit-text>
    <ui-icon name="wifi" w="20" h="16" style="margin-left:23px"></ui-icon><ui-icon name="speaker" w="20" h="16" style="margin-left:10px"></ui-icon><ui-icon name="battery" w="20" h="16" style="margin-left:10px"></ui-icon>
    <div class="clock"><fit-text w="54">9:34 PM</fit-text><fit-text w="69">5/15/2025</fit-text></div><ui-icon name="bell" w="17" h="19"></ui-icon>`;
  }
}
customElements.define('task-bar',TaskBar);

class DesktopScreen extends HTMLElement{
  connectedCallback(){
    this.attachShadow({mode:'open'}).innerHTML=`<style>:host{display:block;width:1920px;height:1080px}main{display:flex}</style><browser-chrome></browser-chrome><main><side-bar></side-bar><recipe-page></recipe-page></main><task-bar></task-bar>`;
  }
}
customElements.define('desktop-screen',DesktopScreen);
</script>
</body>
</html>
